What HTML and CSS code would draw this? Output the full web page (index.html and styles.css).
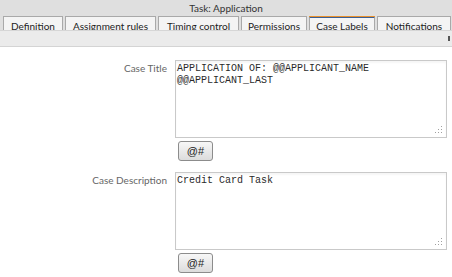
FILE: index.html
```html
<!DOCTYPE html>
<html>
<head>
<meta charset="utf-8">
<link rel="stylesheet" href="styles.css">
</head>
<body>
<div class="window">
  <div class="titlebar">Task: Application</div>
  <div class="tabs">
    <div class="tab t1">Definition</div>
    <div class="tab t2">Assignment rules</div>
    <div class="tab t3">Timing control</div>
    <div class="tab t4">Permissions</div>
    <div class="tab t5 active">Case Labels</div>
    <div class="tab t6">Notifications</div>
  </div>
  <div class="toolbar"><span class="mark"></span></div>
  <div class="form">
    <div class="row">
      <label class="label">Case Title</label>
      <div class="field">
        <div class="areawrap">
          <textarea class="area">APPLICATION OF: @@APPLICANT_NAME
@@APPLICANT_LAST</textarea>
          <svg class="grip" width="8" height="8" viewBox="0 0 8 8"><rect x="6" y="0" width="1" height="1"/><rect x="6" y="3" width="1" height="1"/><rect x="3" y="3" width="1" height="1"/><rect x="6" y="6" width="1" height="1"/><rect x="3" y="6" width="1" height="1"/><rect x="0" y="6" width="1" height="1"/></svg>
        </div>
        <button class="btn">@#</button>
      </div>
    </div>
    <div class="row">
      <label class="label">Case Description</label>
      <div class="field">
        <div class="areawrap">
          <textarea class="area">Credit Card Task</textarea>
          <svg class="grip" width="8" height="8" viewBox="0 0 8 8"><rect x="6" y="0" width="1" height="1"/><rect x="6" y="3" width="1" height="1"/><rect x="3" y="3" width="1" height="1"/><rect x="6" y="6" width="1" height="1"/><rect x="3" y="6" width="1" height="1"/><rect x="0" y="6" width="1" height="1"/></svg>
        </div>
        <button class="btn">@#</button>
      </div>
    </div>
  </div>
</div>
</body>
</html>
```
FILE: styles.css
```css
html, body {
  margin: 0;
  padding: 0;
  background: #ffffff;
}
body {
  width: 452px;
  height: 277px;
  overflow: hidden;
  font-family: "Lato", "Open Sans", sans-serif;
}
.titlebar {
  height: 16px;
  line-height: 16px;
  background: #dfdfdf;
  color: #333;
  font-size: 10px;
  text-align: center;
}
.tabs {
  display: flex;
  gap: 2px;
  padding-left: 3px;
  height: 14px;
  background: #dfdfdf;
  overflow: hidden;
}
.tab {
  box-sizing: border-box;
  height: 18px;
  border: 1px solid #a9a9a9;
  border-bottom: none;
  background: #f4f4f4;
  color: #222;
  font-size: 10px;
  line-height: 12px;
  padding-top: 3px;
  text-align: center;
  white-space: nowrap;
}
.t1 { width: 60px; }
.t2 { width: 91px; }
.t3 { width: 81px; }
.t4 { width: 66px; }
.t5 { width: 66px; }
.t6 { width: 74px; }
.tab.active {
  border-top: 2px solid #3a5f95;
  position: relative;
  padding-top: 2px;
}
.tab.active::before {
  content: "";
  position: absolute;
  left: -1px;
  right: -1px;
  top: -2px;
  height: 1px;
  background: #e8902c;
}
.toolbar {
  box-sizing: border-box;
  height: 17px;
  background: #ebebeb;
  border-top: 1px solid #d6d6d6;
  border-bottom: 1px solid #d4d4d4;
  display: flex;
  justify-content: flex-end;
  align-items: center;
}
.mark {
  width: 2px;
  height: 5px;
  background: #555;
  margin-right: 2px;
}
.form {
  padding-top: 13px;
  display: flex;
  flex-direction: column;
  gap: 11px;
}
.row {
  display: flex;
  gap: 8px;
}
.label {
  width: 167px;
  text-align: right;
  font-size: 10px;
  color: #666;
  padding-top: 2px;
}
.field {
  display: flex;
  flex-direction: column;
  align-items: flex-start;
  gap: 3px;
}
.areawrap {
  position: relative;
  width: 272px;
  height: 78px;
}
.area {
  display: block;
  box-sizing: border-box;
  width: 272px;
  height: 78px;
  margin: 0;
  border: 1px solid #c9c9c9;
  box-shadow: inset 0 2px 2px rgba(0,0,0,0.04);
  padding: 2px 1px;
  font-family: "Liberation Mono", monospace;
  font-size: 10px;
  line-height: 12px;
  color: #2a2a2a;
  resize: none;
  outline: none;
  background: #fff;
}
.grip {
  position: absolute;
  right: 4px;
  bottom: 4px;
  fill: #a0a0a0;
}
.btn {
  box-sizing: border-box;
  margin: 0 0 0 3px;
  width: 35px;
  height: 20px;
  border: 1px solid #8c8c8c;
  border-radius: 3px;
  background: linear-gradient(#f7f7f7, #dcdcdc);
  font-family: "Liberation Sans", sans-serif;
  font-size: 11px;
  color: #222;
  padding: 0;
}
```
